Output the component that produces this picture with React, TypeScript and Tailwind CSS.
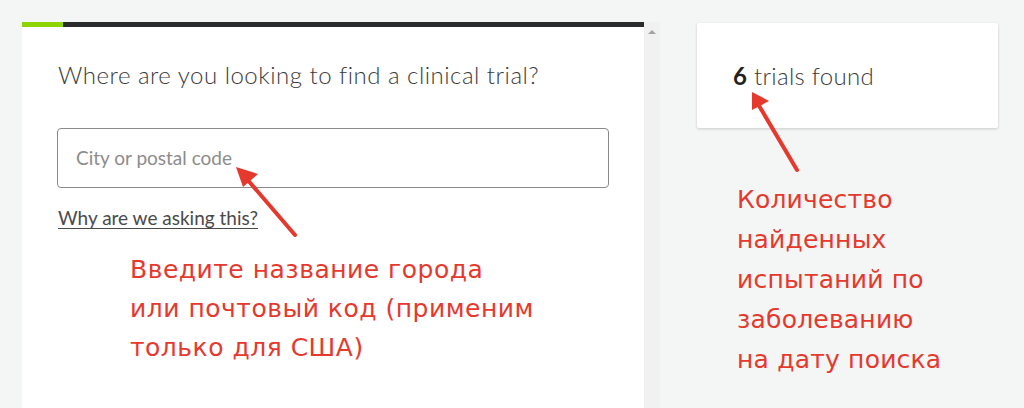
import React from "react";

const lato = { fontFamily: "Lato, 'Open Sans', sans-serif" };
const hand = { fontFamily: "'DejaVu Sans', sans-serif" };

function Arrows() {
	return (
		<svg
			className="pointer-events-none absolute left-0 top-0"
			width={1024}
			height={408}
			viewBox="0 0 1024 408"
		>
			{/* arrow to the input */}
			<line x1={295} y1={235} x2={246} y2={178} stroke="#e5392d" strokeWidth={4} strokeLinecap="round" />
			<polygon points="236,167 258,174 243,187" fill="#e5392d" />
			{/* arrow to the count */}
			<line x1={797} y1={170} x2={758} y2={104} stroke="#e5392d" strokeWidth={4} strokeLinecap="round" />
			<polygon points="752,92 769,101 752,110" fill="#e5392d" />
		</svg>
	);
}

export default function App() {
	return (
		<div className="relative h-[408px] w-[1024px] overflow-hidden bg-[#f4f5f5]" style={lato}>
			<div className="flex items-start pl-[22px] pt-[22px]">
				{/* search card + scrollbar */}
				<div className="flex h-[386px] w-[638px]">
					<div className="flex w-[622px] flex-col bg-white">
						<div className="flex h-[5px]">
							<div className="w-[41px] bg-[#8ed400]" />
							<div className="flex-1 bg-[#2a2b2d]" />
						</div>
						<div className="flex flex-col pl-[36px] pt-[33px]">
							<h2 className="text-[24px] font-light leading-[30px] tracking-[0.5px] text-[#3a3a3a]">
								Where are you looking to find a clinical trial?
							</h2>
							<div className="-ml-px mt-[38px] flex h-[60px] w-[552px] items-center rounded-[4px] border border-[#8a8a8a] pl-[18px]">
								<span className="text-[19px] text-[#8c8c8c]">City or postal code</span>
							</div>
							<a className="mt-[18px] w-fit text-[19px] leading-[24px] text-[#4a4a4a] underline decoration-1 underline-offset-[3px]">
								Why are we asking this?
							</a>
							<div
								className="ml-[72px] mt-[20px] text-[25px] leading-[39px] tracking-[0.5px] text-[#e5392d]"
								style={hand}
							>
								<div>Введите название города</div>
								<div>или почтовый код (применим</div>
								<div>только для США)</div>
							</div>
						</div>
					</div>
					<div className="flex w-[16px] justify-center bg-[#f1f1f1] pt-[8px]">
						<div className="h-0 w-0 border-x-[4px] border-b-[4px] border-x-transparent border-b-[#a3a3a3]" />
					</div>
				</div>

				{/* results column */}
				<div className="ml-[37px] flex w-[301px] flex-col">
					<div className="mt-[1px] flex h-[105px] items-center rounded-[2px] bg-white pl-[36px] shadow-[0_1px_3px_rgba(0,0,0,0.18)]">
						<span className="text-[24px] font-light tracking-[0.3px] text-[#3a3a3a]">
							<b className="font-bold text-[#222]">6</b> trials found
						</span>
					</div>
					<div
						className="ml-[40px] mt-[52px] text-[25px] leading-[40px] tracking-[0.2px] text-[#e5392d]"
						style={hand}
					>
						<div>Количество</div>
						<div>найденных</div>
						<div>испытаний по</div>
						<div>заболеванию</div>
						<div>на дату поиска</div>
					</div>
				</div>
			</div>
			<Arrows />
		</div>
	);
}
